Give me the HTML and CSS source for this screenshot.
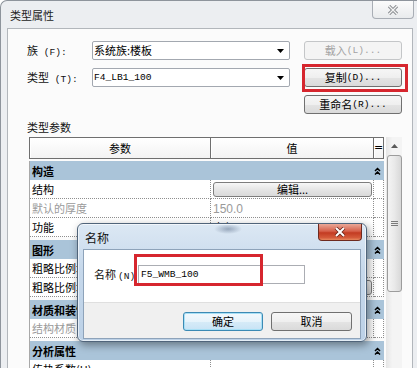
FILE: index.html
```html
<!DOCTYPE html>
<html lang="zh">
<head>
<meta charset="utf-8">
<title>类型属性</title>
<link rel="stylesheet" href="styles.css">
</head>
<body>
<div class="win">
  <div class="titlebar">
    <span class="title">类型属性</span>
    <div class="close-inactive">
      <svg width="12" height="10" viewBox="0 0 12 10"><path d="M2 1 L10 9 M10 1 L2 9" stroke="#8a8d91" stroke-width="3.2" fill="none"/><path d="M2 1 L10 9 M10 1 L2 9" stroke="#f4f4f4" stroke-width="1.2" fill="none"/></svg>
    </div>
  </div>
  <div class="panel">
    <div class="props">
      <div class="lbl">族<span class="lt"> (F):</span></div>
      <div class="combo"><span class="val">系统族:楼板</span><svg class="arrow" width="7" height="4" viewBox="0 0 7 4"><path d="M0 0 H7 L3.5 4 Z" fill="#000"/></svg></div>
      <div class="btn disabled">载入<span class="lt"> (L)...</span></div>
      <div class="lbl">类型<span class="lt"> (T):</span></div>
      <div class="combo"><span class="val lt">F4_LB1_100</span><svg class="arrow" width="7" height="4" viewBox="0 0 7 4"><path d="M0 0 H7 L3.5 4 Z" fill="#000"/></svg></div>
      <div class="btn hl">复制<span class="lt"> (D)...</span></div>
      <div class="btn col3">重命名<span class="lt">(R)...</span></div>
    </div>
    <div class="sect">类型参数</div>
    <div class="grid-area">
      <div class="ptable">
        <div class="hdr">
          <div class="hc">参数</div>
          <div class="hc">值</div>
          <div class="hc eq">=</div>
        </div>
        <div class="body">
          <div class="grp first"><span class="gname">构造</span><span class="gicon"><svg width="7" height="8" viewBox="0 0 7 8"><path d="M1 4 L3.5 1.5 L6 4 M1 7.5 L3.5 5 L6 7.5" stroke="#000" stroke-width="1.5" fill="none"/></svg></span></div>
          <div class="row"><div class="c1">结构</div><div class="c2"><div class="cellbtn">编辑...</div></div><div class="c3"></div></div>
          <div class="row dim"><div class="c1">默认的厚度</div><div class="c2"><span class="lt11">150.0</span></div><div class="c3"></div></div>
          <div class="row"><div class="c1">功能</div><div class="c2">内部</div><div class="c3"></div></div>
          <div class="grp"><span class="gname">图形</span><span class="gicon"><svg width="7" height="8" viewBox="0 0 7 8"><path d="M1 4 L3.5 1.5 L6 4 M1 7.5 L3.5 5 L6 7.5" stroke="#000" stroke-width="1.5" fill="none"/></svg></span></div>
          <div class="row"><div class="c1">粗略比例填充样式</div><div class="c2"></div><div class="c3"></div></div>
          <div class="row"><div class="c1">粗略比例填充颜色</div><div class="c2"><div class="cellbtn">黑色</div></div><div class="c3"></div></div>
          <div class="grp"><span class="gname">材质和装饰</span><span class="gicon"><svg width="7" height="8" viewBox="0 0 7 8"><path d="M1 4 L3.5 1.5 L6 4 M1 7.5 L3.5 5 L6 7.5" stroke="#000" stroke-width="1.5" fill="none"/></svg></span></div>
          <div class="row dim"><div class="c1">结构材质</div><div class="c2"></div><div class="c3"></div></div>
          <div class="grp"><span class="gname">分析属性</span><span class="gicon"><svg width="7" height="8" viewBox="0 0 7 8"><path d="M1 4 L3.5 1.5 L6 4 M1 7.5 L3.5 5 L6 7.5" stroke="#000" stroke-width="1.5" fill="none"/></svg></span></div>
          <div class="row"><div class="c1">传热系数(U)</div><div class="c2"></div><div class="c3"></div></div>
        </div>
      </div>
      <div class="vscroll">
        <div class="sarrow"><svg width="7" height="4" viewBox="0 0 7 4"><path d="M0 4 H7 L3.5 0 Z" fill="#5a5a5a"/></svg></div>
        <div class="thumb"><svg width="7" height="6" viewBox="0 0 7 6"><path d="M0 0.5 H7 M0 2.5 H7 M0 4.5 H7" stroke="#7a7a7a" stroke-width="1"/></svg></div>
      </div>
    </div>
  </div>

  <div class="dialog">
    <div class="dlg-title">
      <span class="dlg-name">名称</span>
      <div class="close-red">
        <svg width="12" height="10" viewBox="0 0 12 10"><path d="M2 1 L10 9 M10 1 L2 9" stroke="#6b2418" stroke-width="3.6" fill="none"/><path d="M2 1 L10 9 M10 1 L2 9" stroke="#ffffff" stroke-width="2" fill="none"/></svg>
      </div>
    </div>
    <div class="dlg-inner">
      <div class="dlg-top">
        <div class="dlg-lbl">名称<span class="lt pn">(N)</span></div>
        <div class="inp-wrap">
          <div class="inp"><span class="lt">F5_WMB_100</span></div>
          <div class="mark"></div>
        </div>
      </div>
      <div class="dlg-bot">
        <div class="dbtn ok">确定</div>
        <div class="dbtn">取消</div>
      </div>
    </div>
  </div>
</div>
</body>
</html>
```
FILE: styles.css
```css
* { box-sizing: border-box; }
html, body { margin: 0; padding: 0; }
body {
  width: 417px;
  height: 368px;
  overflow: hidden;
  background: #ffffff;
  font-family: "Noto Sans CJK SC", sans-serif;
  font-size: 11px;
  color: #000;
}
.lt { font-family: "Liberation Mono", monospace; font-size: 9.6px; }
.lt11 { font-family: "Liberation Sans", sans-serif; font-size: 12px; }

.win {
  position: relative;
  width: 417px;
  height: 368px;
  border-left: 1px solid #8e949c;
  border-top: 1px solid #8e949c;
  border-top-left-radius: 7px;
  background: #eceef1;
  display: flex;
  flex-direction: column;
}

.titlebar {
  height: 27px;
  display: flex;
  justify-content: space-between;
  align-items: flex-start;
  flex: none;
}
.title { padding-left: 9px; padding-top: 6px; line-height: 16px; color: #222; }
.close-inactive {
  width: 42px;
  height: 18px;
  margin-right: 3px;
  border: 1px solid #a9aeb5;
  border-top: none;
  border-radius: 0 0 4px 4px;
  background: linear-gradient(#fbfbfb, #e9ebed);
  display: flex;
  align-items: center;
  justify-content: center;
}

.panel {
  margin-left: 6px;
  width: 406px;
  flex: 1;
  border: 1px solid #b2b6bb;
  border-bottom: none;
  background: #fbfbfb;
  padding: 12px 10px 0 19px;
}

.props {
  display: grid;
  grid-template-columns: 51px 198px 98px;
  column-gap: 14px;
  row-gap: 8px;
  grid-auto-rows: 19px;
}
.lbl { line-height: 19px; color: #111; white-space: nowrap; }
.combo {
  border: 1px solid #a3a8b0;
  background: #fff;
  display: flex;
  align-items: center;
  justify-content: space-between;
  padding: 0 4px 0 1px;
  border-radius: 2px;
}
.combo .val { line-height: 17px; }
.arrow { margin-right: 1px; }

.btn {
  position: relative;
  border: 1px solid #707070;
  border-radius: 3px;
  background: linear-gradient(#f6f6f6 0%, #efefef 50%, #e4e4e4 51%, #dadada 100%);
  display: flex;
  align-items: center;
  justify-content: center;
  line-height: 17px;
  white-space: nowrap;
}
.btn.disabled {
  border-color: #c4c6c8;
  background: #f4f4f4;
  color: #a3a3a3;
}
.btn.col3 { grid-column: 3; }
.btn.hl::after {
  content: "";
  position: absolute;
  left: -3px;
  top: -5px;
  right: -7px;
  bottom: -6px;
  border: 3px solid #d6262e;
}

.sect { margin-top: 5px; line-height: 16px; color: #111; }

.grid-area {
  margin-top: 2px;
  margin-left: 2px;
  display: flex;
  gap: 1px;
  align-items: flex-start;
}
.ptable { width: 355px; }
.hdr {
  display: grid;
  grid-template-columns: 181px 163px 10px;
  border-left: 1px solid #6f6f6f;
  border-top: 1px solid #6f6f6f;
  border-bottom: 1px solid #6f6f6f;
  height: 22px;
  background: linear-gradient(#ffffff, #f3f3f3);
}
.hc {
  border-right: 1px solid #6f6f6f;
  box-shadow: inset 1px 1px 0 #ffffff;
  display: flex;
  align-items: center;
  justify-content: center;
  line-height: 18px;
}
.hc.eq { font-family: "DejaVu Sans", sans-serif; font-size: 11px; justify-content: center; }

.body {
  border-left: 1px solid #a8a8a8;
  padding-top: 0;
}
.grp {
  margin-top: 3px;
  height: 19px;
  background: #aac4d9;
  display: flex;
  align-items: center;
  justify-content: space-between;
  padding-left: 2px;
  padding-right: 3px;
  font-weight: bold;
}
.grp.first { margin-top: 2px; }
.gname { line-height: 18px; white-space: nowrap; }
.gicon { display: flex; align-items: center; }
.row {
  display: grid;
  grid-template-columns: 181px 163px 10px;
  height: 19px;
  background: #fff;
}
.row > div {
  border-bottom: 1px dotted #8f8f8f;
  border-right: 1px dotted #8f8f8f;
  line-height: 18px;
  white-space: nowrap;
  overflow: hidden;
}
.row .c1 { padding-left: 2px; }
.row .c2 { padding-left: 2px; padding-right: 1px; }
.row.dim { color: #9a9a9a; }
.cellbtn {
  margin-top: 2px;
  height: 15px;
  border: 1px solid #7d7d7d;
  border-radius: 3px;
  background: linear-gradient(#f7f7f7, #e6e6e6 50%, #dadada);
  display: flex;
  align-items: center;
  justify-content: center;
  line-height: 13px;
}

.vscroll {
  width: 16px;
  height: 240px;
  margin-left: 1px;
  background: linear-gradient(to right, #e6e6e6, #f4f4f4 40%, #f4f4f4);
  display: flex;
  flex-direction: column;
  align-items: center;
}
.sarrow { height: 17px; display: flex; align-items: center; justify-content: center; }
.thumb {
  margin-top: 1px;
  width: 15px;
  height: 137px;
  border: 1px solid #9c9c9c;
  border-radius: 3px;
  background: linear-gradient(to right, #f4f4f4, #e9e9e9 50%, #d8d8d8);
  display: flex;
  align-items: center;
  justify-content: center;
}

.dialog {
  position: absolute;
  left: 76px;
  top: 222px;
  width: 290px;
  height: 119px;
  border: 1px solid #50647a;
  border-radius: 6px;
  background:
    radial-gradient(ellipse 14px 5px at 150px 5px, rgba(70, 90, 120, 0.45), rgba(70, 90, 120, 0)),
    linear-gradient(#dce8f4, #c6d8eb 40%, #bcd1e7);
  box-shadow: 2px 3px 9px rgba(0, 0, 0, 0.4), inset 0 0 0 1px rgba(255, 255, 255, 0.6);
  padding: 0 5px 2px 5px;
  display: flex;
  flex-direction: column;
}
.dlg-title {
  height: 25px;
  display: flex;
  justify-content: space-between;
  align-items: flex-start;
  flex: none;
}
.dlg-name { padding-left: 2px; padding-top: 6px; line-height: 16px; color: #111; font-size: 12px; }
.close-red {
  width: 44px;
  height: 17px;
  margin-right: -1px;
  border: 1px solid #6e2a1f;
  border-top: none;
  border-radius: 0 0 4px 4px;
  background: linear-gradient(#eaa897 0%, #d6604a 45%, #c33b22 55%, #d45a3a 85%, #e7895f 100%);
  display: flex;
  align-items: center;
  justify-content: center;
}
.dlg-inner {
  flex: 1;
  border: 1px solid #8ea3ba;
  background: #f0f0f0;
  display: flex;
  flex-direction: column;
}
.dlg-top {
  height: 53px;
  background: #ffffff;
  border-bottom: 1px solid #dfdfdf;
  display: flex;
  align-items: flex-start;
  padding: 15px 0 0 10px;
}
.dlg-lbl { width: 44px; flex: none; line-height: 19px; color: #111; white-space: nowrap; }
.dlg-lbl .pn { padding-left: 2px; }
.inp-wrap { position: relative; flex: none; }
.inp {
  width: 167px;
  height: 19px;
  border: 1px solid #abadb3;
  background: #fff;
  display: flex;
  align-items: center;
  padding-left: 2px;
}
.mark {
  position: absolute;
  left: -4px;
  top: -11px;
  width: 129px;
  height: 32px;
  border: 3px solid #d6262e;
}
.dlg-bot {
  flex: 1;
  display: flex;
  justify-content: flex-end;
  align-items: flex-start;
  gap: 8px;
  padding: 9px 8px 0 0;
}
.dbtn {
  width: 81px;
  height: 19px;
  border: 1px solid #707070;
  border-radius: 3px;
  background: linear-gradient(#f6f6f6 0%, #efefef 50%, #e4e4e4 51%, #dadada 100%);
  display: flex;
  align-items: center;
  justify-content: center;
  line-height: 17px;
}
.dbtn.ok {
  width: 80px;
  border-color: #3c8ab4;
  box-shadow: inset 0 0 0 1px #a8e0f6;
  background: linear-gradient(#f3f9fd 0%, #e6f3fb 50%, #d6ebf8 51%, #c8e3f5 100%);
}
```
